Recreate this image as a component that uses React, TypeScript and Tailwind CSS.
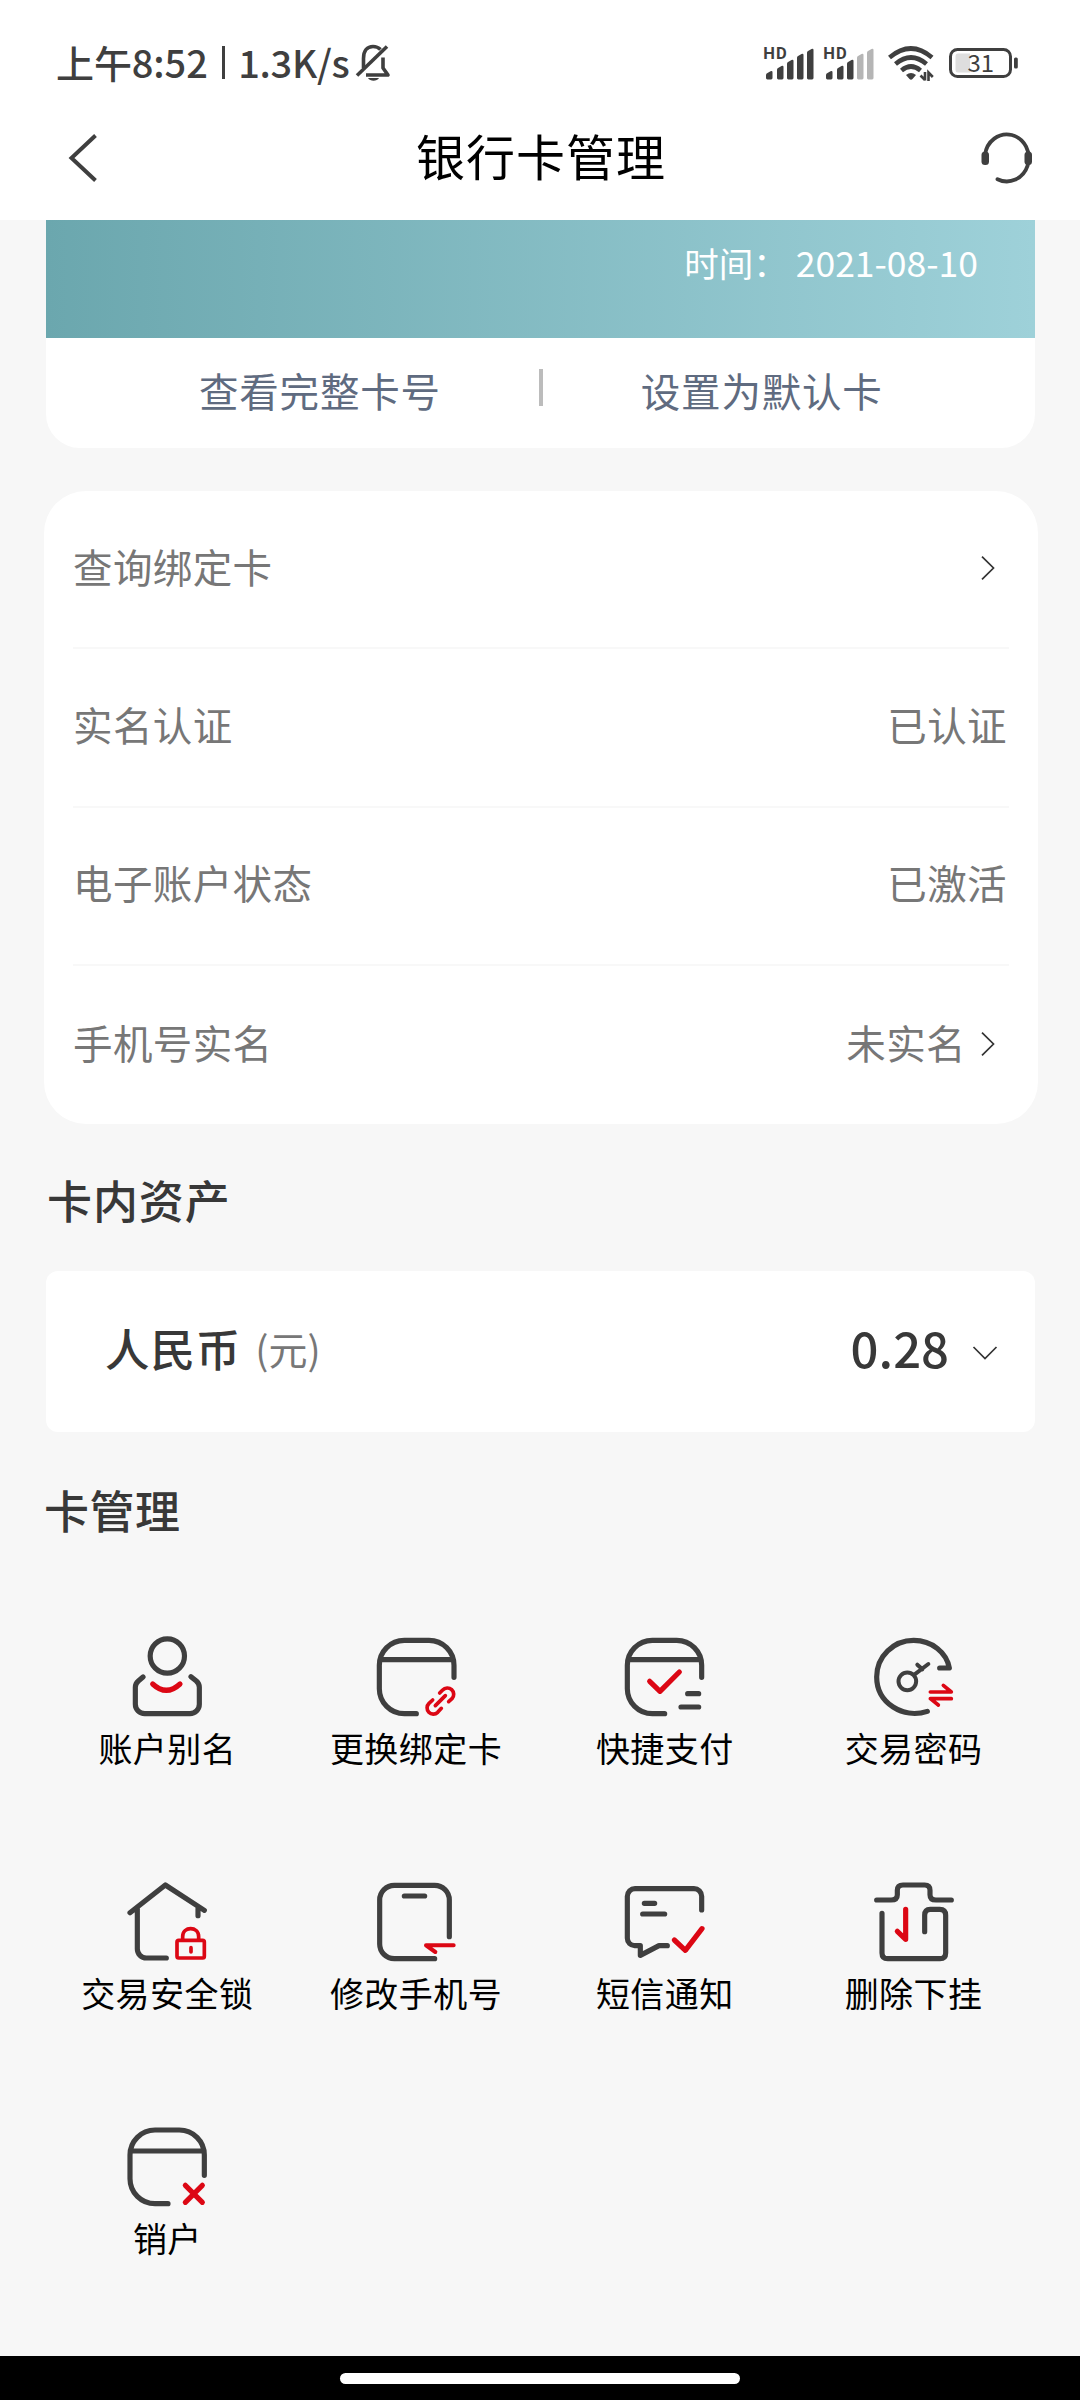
import type { ReactNode } from "react";

const INK = "#3f3f3f";
const RED = "#dc0714";

/* ---------- status bar ---------- */

function MutedBell() {
  return (
    <svg className="ml-[6px] mt-[1px] h-[40px] w-[36px]" viewBox="356 44 36 40" fill="none" stroke={INK} strokeWidth="3.6">
      <path d="M364.5 69V59.500c0-8 4-12 9.500-12c3 0 5.500 1 7.500 3M384 58.500v10.500l5 7H367" strokeLinejoin="round" />
      <path d="M358 76.500L388 47.500" />
      <path d="M369 79H380C378 82.600 371 82.600 369 79Z" fill={INK} stroke="none" />
    </svg>
  );
}

function Signal({ level }: { level: number }) {
  const bars = [
    { x: 3, y: 27 },
    { x: 14, y: 21.7 },
    { x: 24, y: 15.7 },
    { x: 34, y: 9.7 },
    { x: 44, y: 4.7 },
  ];
  return (
    <svg className="h-[38px] w-[53px]" viewBox="0 0 53 38">
      <text x="0.300" y="14.800" fontSize="16.500" fontWeight="700" fill={INK} fontFamily="Roboto, sans-serif" textLength="23.500">
        HD
      </text>
      {bars.map((b, i) => (
        <path
          key={i}
          d={`M${b.x} ${b.y + 4}q0-1.500 1.500-2l3-1.800q2-0.800 2 1V34q0 1.400-1.400 1.400h-3.700q-1.400 0-1.400-1.400z`}
          fill={i < level ? INK : "#b5b5b5"}
        />
      ))}
    </svg>
  );
}

function Wifi() {
  return (
    <svg className="ml-[11px] h-[38px] w-[48px]" viewBox="887 44 48 38" fill="none" stroke={INK} strokeWidth="4.600">
      <path d="M889.500 57.500Q911 39.500 932 57.500" />
      <path d="M895.500 64Q911 51 926.500 64" />
      <path d="M901.500 70.500Q911 62.500 920.500 70.500" />
      <path d="M906 75Q911 71 916 75L912.500 79Q911 80.500 909.500 79Z" fill={INK} stroke="none" />
      <path d="M925 72V80.500M925 80L920.500 75.500M928.500 81V72.500L932.800 77" strokeWidth="2.600" />
    </svg>
  );
}

function Battery() {
  return (
    <svg className="ml-[13px] h-[38px] w-[72px]" viewBox="948 44 72 38">
      <rect x="950.500" y="49.500" width="60" height="27" rx="7" fill="none" stroke={INK} strokeWidth="3" />
      <path d="M958 53.500H970V72.500H958Q955.500 72.500 955.500 70V56Q955.500 53.500 958 53.500Z" fill="#dedede" />
      <rect x="1014" y="57.500" width="3.800" height="11" rx="1.500" fill={INK} />
      <text x="967.500" y="72" fontSize="24" fill={INK} fontFamily="Noto Sans CJK SC, sans-serif">
        31
      </text>
    </svg>
  );
}

function StatusBar() {
  return (
    <div className="flex h-[98px] items-start pl-[56px] pt-[43px] text-[#3f3f3f]">
      <div className="flex h-[38px] items-center whitespace-nowrap text-[38px] font-medium leading-[38px]">
        <span className="tracking-[-0.100px]">上午8:52</span>
        <span className="ml-[14px] h-[33px] w-[3.500px] bg-[#3f3f3f]" />
        <span className="ml-[13px] tracking-[-0.300px]">1.3K/s</span>
        <MutedBell />
      </div>
      <div className="ml-auto mr-[60px] flex h-[38px] items-start pt-[1px]">
        <div className="flex gap-[7px]">
          <Signal level={5} />
          <Signal level={3} />
        </div>
        <Wifi />
        <Battery />
      </div>
    </div>
  );
}

/* ---------- title bar ---------- */

function TitleBar() {
  return (
    <div className="flex h-[122px] items-start justify-between pl-[66px] pr-[46px]">
      <svg className="mt-[34px] h-[52px] w-[34px]" viewBox="66 132 34 52" fill="none" stroke={INK} strokeWidth="4">
        <path d="M95.500 135.500L71.500 158L95.500 180.500" />
      </svg>
      <h1 className="mt-[21px] whitespace-nowrap pl-[2px] text-[49px] leading-[72px] tracking-[1px] text-black">银行卡管理</h1>
      <svg className="mt-[30px] h-[56px] w-[54px]" viewBox="980 128 54 56" fill="none" stroke={INK} strokeWidth="3.800">
        <path d="M985 155A22 23.500 0 1 1 997.500 179.200" strokeLinecap="round" />
        <rect x="981.500" y="151.500" width="7.500" height="13.500" rx="3.500" fill={INK} stroke="none" />
        <rect x="1024.500" y="151.500" width="7.500" height="13.500" rx="3.500" fill={INK} stroke="none" />
      </svg>
    </div>
  );
}

/* ---------- list ---------- */

function ChevronRight() {
  return (
    <svg className="ml-[15px] mr-[12px] mt-[4px] h-[26px] w-[14px]" viewBox="0 0 14 26" fill="none" stroke="#333" strokeWidth="1.700">
      <path d="M1 1.700L12.500 13L1 24.300" />
    </svg>
  );
}

function Row({ label, value, arrow, last }: { label: string; value?: string; arrow?: boolean; last?: boolean }) {
  return (
    <div
      className={`mx-[29px] flex h-[158.300px] items-center justify-between text-[39.500px] leading-none tracking-[0.400px] text-[#777] ${
        last ? "" : "border-b-2 border-[#f8f8f8]"
      }`}
    >
      <span className="-mt-[7px]">{label}</span>
      <span className="-mt-[7px] mr-[2px] flex items-center">
        {value}
        {arrow && <ChevronRight />}
      </span>
    </div>
  );
}

/* ---------- feature icons, drawn on a 252-unit grid ---------- */

function Icon({ box, children }: { box: string; children: ReactNode }) {
  return (
    <svg
      className="h-[84px] w-[84px]"
      viewBox={box}
      fill="none"
      stroke={INK}
      strokeWidth="15.500"
      strokeLinecap="round"
      strokeLinejoin="round"
    >
      {children}
    </svg>
  );
}

const AliasIcon = () => (
  <Icon box="196 102 252 252">
    <circle cx="323" cy="168" r="51.500" />
    <path d="M250 231L236 243Q227 251 227 262V313A28 28 0 0 0 255 341H391A28 28 0 0 0 419 313V262Q419 251 410 243L394 230" />
    <path d="M279 252Q320 290 361 252" stroke={RED} />
  </Icon>
);

const RebindIcon = () => (
  <Icon box="942 102 252 252">
    <path d="M1182 232V196A75 75 0 0 0 1107 121H1033A75 75 0 0 0 958 196V266A75 75 0 0 0 1033 341H1069M962 179H1178" />
    <g stroke={RED} strokeWidth="11">
      <path d="M1139 279L1148 270A19 19 0 0 1 1176 296L1166 305M1118 300L1107 310A18 18 0 0 0 1133 337L1144 325M1126 317L1156 287" />
    </g>
  </Icon>
);

const QuickPayIcon = () => (
  <Icon box="189 102 252 252">
    <path d="M425 232V196A75 75 0 0 0 350 121H277A75 75 0 0 0 202 196V266A75 75 0 0 0 277 341H314M206 179H421M383 281H416M363 321H416" />
    <path d="M269 244L300 274L358 216" stroke={RED} />
  </Icon>
);

const PasswordIcon = () => (
  <Icon box="935 102 252 252">
    <path d="M1101 334C1030 358 949 310 949 231C949 168 1000 121 1060 121C1115 121 1159 158 1167 204H1138" />
    <circle cx="1041" cy="244" r="26.500" strokeWidth="12" />
    <path d="M1062 224L1104 192M1071 194L1086 208" strokeWidth="12" />
    <g stroke={RED} strokeWidth="11">
      <path d="M1110 276H1173L1149 256M1173 296H1110L1134 315" />
    </g>
  </Icon>
);

const LockIcon = () => (
  <Icon box="196 87 252 252">
    <path d="M211 188L317 105L434 181M233 176V297A27 27 0 0 0 260 324H320M415 176V197" />
    <g stroke={RED} strokeWidth="11">
      <rect x="352" y="271" width="82" height="53" rx="5" />
      <path d="M369 268V260C369 228 417 228 417 260V268M394 293V306" />
    </g>
  </Icon>
);

const PhoneIcon = () => (
  <Icon box="942 87 252 252">
    <path d="M1168 260V150A44 44 0 0 0 1124 106H1003A44 44 0 0 0 959 150V282A44 44 0 0 0 1003 326H1124M1033 138H1094" />
    <path d="M1181 286H1098L1126 306" stroke={RED} strokeWidth="12" />
  </Icon>
);

const SmsIcon = () => (
  <Icon box="189 87 252 252">
    <path d="M425 180V139A23 23 0 0 0 402 116H225A23 23 0 0 0 202 139V265A22 22 0 0 0 224 287H241V316L297 287H322M253 160H284M248 192H314" />
    <path d="M343 270L376 301L426 236" stroke={RED} />
  </Icon>
);

const RemoveIcon = () => (
  <Icon box="935 87 252 252">
    <path d="M949 150H992Q1011 150 1011 134V121Q1011 105 1028 105H1093Q1109 105 1109 121V134Q1109 150 1127 150H1173M965 190V309Q965 326 982 326H1139Q1156 326 1156 309V196Q1156 178 1138 178H1110Q1093 178 1093 196V245" />
    <path d="M1036 178V268L1011 244" stroke={RED} />
  </Icon>
);

const CloseIcon = () => (
  <Icon box="196 72 252 252">
    <path d="M434 226V165A75 75 0 0 0 359 90H286A75 75 0 0 0 211 165V236A75 75 0 0 0 286 311H325M215 153H430" />
    <path d="M377 256L428 307M428 256L377 307" stroke={RED} />
  </Icon>
);

const features = [
  { label: "账户别名", Glyph: AliasIcon },
  { label: "更换绑定卡", Glyph: RebindIcon },
  { label: "快捷支付", Glyph: QuickPayIcon },
  { label: "交易密码", Glyph: PasswordIcon },
  { label: "交易安全锁", Glyph: LockIcon },
  { label: "修改手机号", Glyph: PhoneIcon },
  { label: "短信通知", Glyph: SmsIcon },
  { label: "删除下挂", Glyph: RemoveIcon },
  { label: "销户", Glyph: CloseIcon },
];

export default function App() {
  return (
    <div className="flex h-[2400px] w-[1080px] flex-col overflow-hidden bg-[#f7f7f7] font-['Noto_Sans_CJK_SC',sans-serif]">
      <header className="h-[220px] shrink-0 bg-white">
        <StatusBar />
        <TitleBar />
      </header>

      <main className="min-h-0 flex-1 overflow-hidden">
        <section className="ml-[46px] h-[228px] w-[989px] overflow-hidden rounded-b-[34px] bg-white">
          <div className="flex h-[118px] justify-end bg-linear-to-r from-[#6ba7ae] to-[#9ed1d9] pr-[57px] pt-[18px] text-[34.500px] leading-[48px] text-white">
            <span>时间：</span>
            <span className="ml-[8px] text-[35.500px]">2021-08-10</span>
          </div>
          <div className="flex h-[110px] items-start text-[39.500px] leading-[60px] tracking-[0.800px] text-[#5f6b80]">
            <span className="ml-[153px] mt-[22px]">查看完整卡号</span>
            <span className="ml-[98px] mt-[31px] h-[37px] w-[4px] bg-[#bcbcbc]" />
            <span className="ml-[98px] mt-[22px]">设置为默认卡</span>
          </div>
        </section>

        <section className="ml-[44px] mt-[43px] h-[633px] w-[994px] rounded-[42px] bg-white">
          <Row label="查询绑定卡" arrow />
          <Row label="实名认证" value="已认证" />
          <Row label="电子账户状态" value="已激活" />
          <Row label="手机号实名" value="未实名" arrow last />
        </section>

        <h2 className="ml-[47px] mt-[43px] text-[45px] font-medium leading-[66px] tracking-[0.900px] text-[#383838]">卡内资产</h2>

        <section className="ml-[46px] mt-[38px] flex h-[161px] w-[989px] items-center rounded-[12px] bg-white pl-[59px] pr-[37px] text-[#383838]">
          <span className="-mt-[7px] text-[44.500px] font-medium leading-none tracking-[0.900px]">人民币</span>
          <span className="-mt-[7px] ml-[14px] text-[39px] leading-none text-[#777]">(元)</span>
          <span className="-mt-[10px] ml-auto text-[49px] font-medium leading-none">0.28</span>
          <svg className="ml-[23px] mt-[2px] h-[16px] w-[26px]" viewBox="0 0 26 16" fill="none" stroke="#333" strokeWidth="1.700">
            <path d="M1.500 2L13 13.500L24.500 2" />
          </svg>
        </section>

        <h2 className="ml-[44px] mt-[45px] text-[45px] font-medium leading-[66px] tracking-[0.500px] text-[#383838]">卡管理</h2>

        <section className="ml-[43px] mt-[91px] grid w-[995px] auto-rows-[245px] grid-cols-4">
          {features.map(({ label, Glyph }) => (
            <div key={label} className="flex flex-col items-center">
              <Glyph />
              <span className="mt-[6px] whitespace-nowrap text-[34px] leading-[48px] tracking-[0.500px] text-black">{label}</span>
            </div>
          ))}
        </section>
      </main>

      <footer className="flex h-[44px] shrink-0 justify-center bg-black pt-[17px]">
        <div className="h-[11px] w-[400px] rounded-full bg-white" />
      </footer>
    </div>
  );
}
